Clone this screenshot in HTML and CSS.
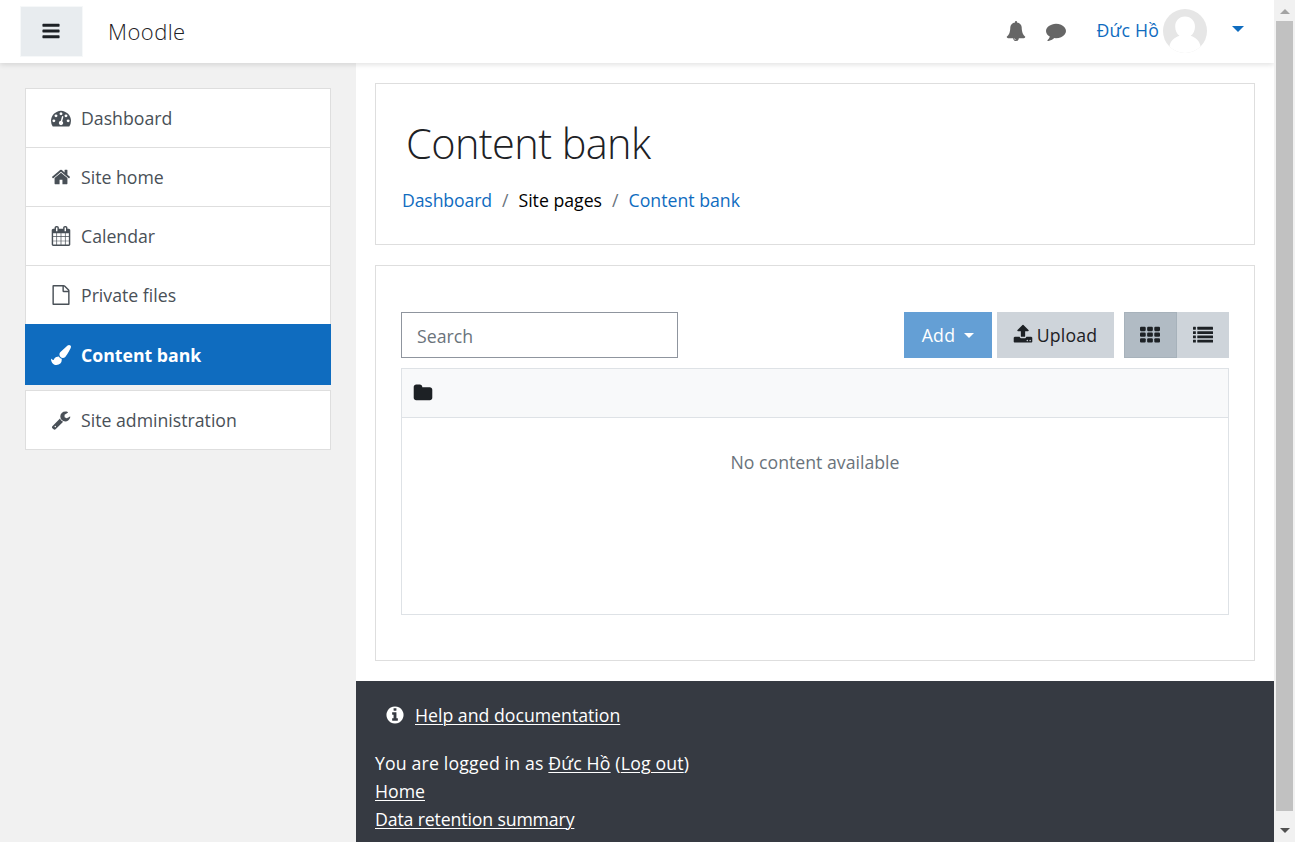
FILE: index.html
```html
<!DOCTYPE html>
<html lang="en">
<head>
<meta charset="utf-8">
<title>Content bank</title>
<link rel="stylesheet" href="styles.css">
</head>
<body>
<div class="window">
  <div class="page">
    <header class="navbar">
      <button class="drawer-toggle" aria-label="Side panel">
        <svg class="icon" viewBox="0 0 1792 1792"><path d="M1664 1344v128q0 26-19 45t-45 19h-1408q-26 0-45-19t-19-45v-128q0-26 19-45t45-19h1408q26 0 45 19t19 45zm0-512v128q0 26-19 45t-45 19h-1408q-26 0-45-19t-19-45v-128q0-26 19-45t45-19h1408q26 0 45 19t19 45zm0-512v128q0 26-19 45t-45 19h-1408q-26 0-45-19t-19-45v-128q0-26 19-45t45-19h1408q26 0 45 19t19 45z"/></svg>
      </button>
      <span class="brand">Moodle</span>
      <div class="tools">
        <svg class="icon" viewBox="0 0 1792 1792"><path d="M912 1696q0-16-16-16-59 0-101.500-42.500t-42.500-101.500q0-16-16-16t-16 16q0 73 51.500 124.500t124.500 51.500q16 0 16-16zm816-288q0 52-38 90t-90 38h-448q0 106-75 181t-181 75-181-75-75-181h-448q-52 0-90-38t-38-90q50-42 91-88t85-119.500 74.500-158.500 50-206 19.500-260q0-152 117-282.500t307-158.500q-8-19-8-39 0-40 28-68t68-28 68 28 28 68q0 20-8 39 190 28 307 158.500t117 282.500q0 139 19.500 260t50 206 74.500 158.500 85 119.500 91 88z"/></svg>
        <svg class="icon" viewBox="0 0 1792 1792"><path d="M1792 896q0 174-120 321.500t-326 233-450 85.500q-70 0-145-8-198 175-460 242-49 14-114 22-17 2-30.500-9t-17.500-29v-1q-3-4-.5-12t2-10 4.500-9.500l6-9 7-8.500 8-9q7-8 31-34.500t34.500-38 31-39.500 32.500-51 27-59 26-76q-157-89-247.500-220t-90.500-281q0-130 71-248.500t191-204.500 286-136.500 348-50.500q244 0 450 85.500t326 233 120 321.500z"/></svg>
      </div>
      <a class="user"><span class="username">Đức Hồ</span>
        <svg class="avatar" viewBox="0 0 44 44"><defs><clipPath id="disc"><circle cx="22" cy="22" r="22"/></clipPath></defs><g clip-path="url(#disc)"><rect width="44" height="44" fill="#e6e6e6"/><path fill="#fff" d="M22 7.500c-6 0-9.800 4.300-9.800 10.200 0 4 1.700 7.200 4.300 9C11 28.500 7.500 32 6.500 37L4 44h36l-2.500-7c-1-5-4.500-8.500-9.800-10.300 2.600-1.800 4.300-5 4.300-9 0-5.900-4-10.200-10-10.200z"/></g></svg>
      </a>
      <span class="caret user-caret"></span>
    </header>
    <div class="columns">
      <nav class="drawer">
        <ul class="nav-group">
          <li class="nav-item"><svg class="icon" viewBox="0 0 1792 1792"><path d="M384 1152q0-53-37.500-90.500t-90.500-37.500-90.500 37.500-37.500 90.500 37.500 90.500 90.500 37.500 90.500-37.500 37.500-90.500zm192-448q0-53-37.500-90.500t-90.500-37.500-90.500 37.500-37.500 90.500 37.500 90.500 90.500 37.500 90.500-37.500 37.500-90.500zm428 481l101-382q6-26-7.500-48.500t-38.500-29.500-48 6.500-30 39.500l-101 382q-60 5-107 43.500t-63 98.500q-20 77 20 146t117 89 146-20 89-117q16-60-6-117t-72-91zm660-33q0-53-37.500-90.500t-90.500-37.500-90.500 37.500-37.500 90.500 37.500 90.500 90.500 37.500 90.500-37.500 37.500-90.500zm-640-640q0-53-37.500-90.500t-90.500-37.500-90.500 37.500-37.500 90.500 37.500 90.500 90.500 37.500 90.500-37.500 37.500-90.500zm448 192q0-53-37.500-90.500t-90.500-37.500-90.500 37.500-37.500 90.500 37.500 90.500 90.500 37.500 90.500-37.500 37.500-90.500zm320 448q0 261-141 483-19 29-54 29h-1402q-35 0-54-29-141-221-141-483 0-182 71-348t191-286 286-191 348-71 348 71 286 191 191 286 71 348z"/></svg><span>Dashboard</span></li>
          <li class="nav-item"><svg class="icon" viewBox="0 0 1792 1792"><path d="M1472 992v480q0 26-19 45t-45 19h-384v-384h-256v384h-384q-26 0-45-19t-19-45v-480q0-1 .5-3t.5-3l575-474 575 474q1 2 1 6zm223-69l-62 74q-8 9-21 11h-3q-13 0-21-7l-692-577-692 577q-12 8-24 7-13-2-21-11l-62-74q-8-10-7-23.500t11-21.500l719-599q32-26 76-26t76 26l244 204v-195q0-14 9-23t23-9h192q14 0 23 9t9 23v408l219 182q10 8 11 21.500t-7 23.500z"/></svg><span>Site home</span></li>
          <li class="nav-item"><svg class="icon" viewBox="0 0 1792 1792"><path d="M192 1664h288v-288h-288v288zm352 0h320v-288h-320v288zm-352-352h288v-320h-288v320zm352 0h320v-320h-320v320zm-352-384h288v-288h-288v288zm736 736h320v-288h-320v288zm-384-736h320v-288h-320v288zm768 736h288v-288h-288v288zm-384-352h320v-320h-320v320zm-352-864v-288q0-13-9.500-22.500t-22.500-9.500h-64q-13 0-22.500 9.500t-9.500 22.500v288q0 13 9.500 22.500t22.500 9.500h64q13 0 22.500-9.500t9.500-22.500zm736 864h288v-320h-288v320zm-384-384h320v-288h-320v288zm384 0h288v-288h-288v288zm32-480v-288q0-13-9.500-22.500t-22.500-9.500h-64q-13 0-22.500 9.500t-9.500 22.500v288q0 13 9.500 22.500t22.500 9.500h64q13 0 22.500-9.500t9.500-22.500zm384-64v1280q0 52-38 90t-90 38h-1408q-52 0-90-38t-38-90v-1280q0-52 38-90t90-38h128v-96q0-66 47-113t113-47h64q66 0 113 47t47 113v96h384v-96q0-66 47-113t113-47h64q66 0 113 47t47 113v96h128q52 0 90 38t38 90z"/></svg><span>Calendar</span></li>
          <li class="nav-item"><svg class="icon" viewBox="0 0 1792 1792"><path d="M1596 380q28 28 48 76t20 88v1152q0 40-28 68t-68 28h-1344q-40 0-68-28t-28-68v-1600q0-40 28-68t68-28h896q40 0 88 20t76 48zm-444-244v376h376q-10-29-22-41l-313-313q-12-12-41-22zm384 1528v-1024h-416q-40 0-68-28t-28-68v-416h-768v1536h1280z"/></svg><span>Private files</span></li>
          <li class="nav-item active"><svg class="icon" viewBox="0 0 1792 1792"><path d="M1615 0q70 0 122.500 46.500t52.500 116.500q0 63-45 151-332 629-465 752-97 91-218 91-126 0-216.500-92.500t-90.500-219.500q0-128 92-212l638-579q59-54 130-54zm-909 1034q39 76 106.500 130t150.500 76l1 71q4 213-129.500 347t-348.500 134q-123 0-218-46.500t-152.500-127.500-86.500-183-29-220q7 5 41 30t62 44.500 59 36.500 46 17q41 0 55-37 25-66 57.500-112.500t69.500-76 88-47.500 103-25.500 125-10.500z"/></svg><span>Content bank</span></li>
        </ul>
        <ul class="nav-group">
          <li class="nav-item"><svg class="icon" viewBox="0 0 1792 1792"><path d="M448 1472q0-26-19-45t-45-19-45 19-19 45 19 45 45 19 45-19 19-45zm644-420l-682 682q-37 37-90 37-52 0-91-37l-106-108q-38-36-38-90 0-53 38-91l681-681q39 98 114.500 173.500t173.500 114.500zm634-435q0 39-23 106-47 134-164.500 217.500t-258.500 83.500q-185 0-316.500-131.500t-131.500-316.500 131.500-316.500 316.500-131.500q58 0 121.500 16.500t107.500 46.500q16 11 16 28t-16 28l-293 169v224l193 107q5-3 79-48.500t135.500-81 70.500-35.500q15 0 23.500 10t8.500 25z"/></svg><span>Site administration</span></li>
        </ul>
      </nav>
      <div class="main">
        <section class="card page-header">
          <h1>Content bank</h1>
          <div class="breadcrumb"><a>Dashboard</a><i>/</i><span>Site pages</span><i>/</i><a>Content bank</a></div>
        </section>
        <section class="card content">
          <div class="toolbar">
            <input class="search" type="text" placeholder="Search">
            <div class="actions">
              <button class="btn btn-add"><span>Add</span><span class="caret"></span></button>
              <button class="btn btn-upload"><svg class="icon" viewBox="0 0 1792 1792"><path d="M1344 1472q0-26-19-45t-45-19-45 19-19 45 19 45 45 19 45-19 19-45zm256 0q0-26-19-45t-45-19-45 19-19 45 19 45 45 19 45-19 19-45zm128-224v320q0 40-28 68t-68 28h-1472q-40 0-68-28t-28-68v-320q0-40 28-68t68-28h427q21 56 70.500 92t110.500 36h256q61 0 110.500-36t70.500-92h427q40 0 68 28t28 68zm-325-648q-17 40-59 40h-256v448q0 26-19 45t-45 19h-256q-26 0-45-19t-19-45v-448h-256q-42 0-59-40-17-39 14-69l448-448q18-19 45-19t45 19l448 448q31 30 14 69z"/></svg><span>Upload</span></button>
              <div class="view-switch">
                <button class="btn btn-grid" aria-label="Icons"><svg class="icon" viewBox="0 0 1792 1792"><g><rect x="0" y="256" width="512" height="384" rx="96"/><rect x="640" y="256" width="512" height="384" rx="96"/><rect x="1280" y="256" width="512" height="384" rx="96"/><rect x="0" y="768" width="512" height="384" rx="96"/><rect x="640" y="768" width="512" height="384" rx="96"/><rect x="1280" y="768" width="512" height="384" rx="96"/><rect x="0" y="1280" width="512" height="384" rx="96"/><rect x="640" y="1280" width="512" height="384" rx="96"/><rect x="1280" y="1280" width="512" height="384" rx="96"/></g></svg></button>
                <button class="btn btn-list" aria-label="List"><svg class="icon" viewBox="0 0 1792 1792"><g><rect x="0" y="256" width="256" height="256" rx="32"/><rect x="384" y="256" width="1408" height="256" rx="32"/><rect x="0" y="640" width="256" height="256" rx="32"/><rect x="384" y="640" width="1408" height="256" rx="32"/><rect x="0" y="1024" width="256" height="256" rx="32"/><rect x="384" y="1024" width="1408" height="256" rx="32"/><rect x="0" y="1408" width="256" height="256" rx="32"/><rect x="384" y="1408" width="1408" height="256" rx="32"/></g></svg></button>
              </div>
            </div>
          </div>
          <div class="bank">
            <div class="bank-path"><svg class="icon" viewBox="0 0 1792 1792"><path d="M1728 608v704q0 92-66 158t-158 66h-1216q-92 0-158-66t-66-158v-960q0-92 66-158t158-66h320q92 0 158 66t66 158v32h672q92 0 158 66t66 158z"/></svg></div>
            <p class="empty">No content available</p>
          </div>
        </section>
        <footer class="footer">
          <div class="help"><svg class="icon" viewBox="0 0 1792 1792"><path d="M1152 1376v-160q0-14-9-23t-23-9h-96v-512q0-14-9-23t-23-9h-320q-14 0-23 9t-9 23v160q0 14 9 23t23 9h96v320h-96q-14 0-23 9t-9 23v160q0 14 9 23t23 9h448q14 0 23-9t9-23zm-128-896v-160q0-14-9-23t-23-9h-192q-14 0-23 9t-9 23v160q0 14 9 23t23 9h192q14 0 23-9t9-23zm640 416q0 209-103 385.500t-279.500 279.500-385.500 103-385.500-103-279.500-279.500-103-385.500 103-385.500 279.500-279.500 385.500-103 385.500 103 279.500 279.500 103 385.500z"/></svg><a>Help and documentation</a></div>
          <div class="login">You are logged in as <a>Đức Hồ</a> (<a>Log out</a>)</div>
          <div><a>Home</a></div>
          <div><a class="retention">Data retention summary</a></div>
        </footer>
      </div>
    </div>
  </div>
  <div class="scrollbar"><span class="arrow up"></span><span class="thumb"></span><span class="arrow down"></span></div>
</div>
</body>
</html>
```
FILE: styles.css
```css
* { box-sizing: border-box; }
body {
  margin: 0;
  font: 17.7px/28px "Open Sans", "Noto Sans", sans-serif;
  color: #1d2125;
  background: #fff;
  overflow: hidden;
}
ul { list-style: none; margin: 0; padding: 0; }
button, input { font: inherit; color: inherit; letter-spacing: inherit; }
button { border: 0; padding: 0; }
.icon { width: 20px; height: 20px; fill: currentColor; flex: none; display: block; }
.caret { border: 5.500px solid transparent; border-top-color: currentColor; border-bottom: 0; flex: none; }

.window { display: flex; width: 1295px; height: 842px; }
.page { width: 1274px; display: flex; flex-direction: column; }

.navbar {
  height: 63px;
  flex: none;
  display: flex;
  align-items: center;
  padding: 0 30px 0 21px;
  background: #fff;
  box-shadow: 0 2px 5px rgba(0, 0, 0, .11);
  position: relative;
}
.drawer-toggle {
  width: 61px;
  height: 49px;
  background: #e8ecef;
  box-shadow: 0 0 0 1px #f6f8f9;
  display: flex;
  justify-content: center;
  align-items: center;
  padding: 0 1px 2px 0;
}
.brand { margin-left: 26px; font-size: 22px; font-weight: 300; letter-spacing: .45px; padding-bottom: 1px; }
.tools { display: flex; gap: 20px; margin-left: auto; padding-bottom: 2px; color: #666; }
.user { display: flex; align-items: center; gap: 4px; margin-left: 30px; padding-bottom: 2px; color: #0f6cbf; }
.username { padding-bottom: 2px; letter-spacing: .2px; }
.avatar { width: 44px; height: 44px; }
.user-caret { color: #0f6cbf; margin: 0 0 6px 25px; border-width: 6px 6px 0; }

.columns { flex: 1; display: flex; min-height: 0; }
.drawer {
  width: 356px;
  background: #f1f1f1;
  padding: 25px 25px 0;
  display: flex;
  flex-direction: column;
  gap: 5px;
}
.nav-item {
  height: 59px;
  display: flex;
  align-items: center;
  gap: 10px;
  padding: 0 25px 0 25px;
  border: 1px solid #dedede;
  border-bottom: 0;
  background: #fff;
  color: #495057;
}
.nav-item:last-child { border-bottom: 1px solid #dedede; height: 60px; }
.nav-item.active:last-child {
  height: 61px;
  background: #0f6cbf;
  border-color: #0f6cbf;
  color: #fff;
  font-weight: 700;
}

.main { flex: 1; display: flex; flex-direction: column; padding-top: 20px; }
.card { border: 1px solid #dedede; margin: 0 19px 20px; }
.page-header { height: 162px; padding: 34px 26px 0; }
h1 { margin: 0 0 20px 4px; font-size: 41.500px; letter-spacing: -.6px; line-height: 50px; font-weight: 300; }
.breadcrumb { display: flex; color: #000; line-height: 24px; }
.breadcrumb a { color: #0f6cbf; }
.breadcrumb a:first-child { letter-spacing: -.15px; }
.breadcrumb i { font-style: normal; color: #6a737b; padding: 0 10px; }
.content { height: 396px; padding: 46px 25px 0; }
.toolbar { display: flex; justify-content: space-between; height: 46px; margin-bottom: 10px; }
.search { width: 277px; padding: 2px 15px 0; border: 1px solid #8f959e; background: #fff; }
.search::placeholder { color: #6a737b; opacity: 1; }
.actions { display: flex; gap: 5px; }
.btn { display: flex; align-items: center; justify-content: center; background: #ced4da; }
.btn-add { width: 88px; gap: 9px; background: #649fd5; color: #fff; letter-spacing: .3px; }
.btn-upload { width: 117px; gap: 4px; padding-right: 1px; letter-spacing: .15px; }
.view-switch { display: flex; margin-left: 5px; }
.btn .icon { margin-bottom: 2px; }
.btn-grid { width: 53px; padding-right: 1px; background: #b1bbc4; border: 1px solid #a7b2bb; }
.btn-list { width: 52px; }
.bank { height: 247px; border: 1px solid #dee2e6; }
.bank-path { height: 49px; padding: 14px 11px; background: #f8f9fa; border-bottom: 1px solid #dee2e6; }
.empty { margin: 30px 0 0; text-align: center; color: #6a737b; }

.footer { flex: 1; background: #363a42; color: #fff; padding: 20px 19px 0; white-space: nowrap; }
.footer a { text-decoration: underline; text-decoration-thickness: 1px; text-underline-offset: 2px; }
.help { display: flex; align-items: center; gap: 10px; padding-left: 10px; margin-bottom: 20px; }
.login { letter-spacing: .16px; }
.retention { letter-spacing: -.14px; }

.scrollbar {
  width: 21px;
  background: #f1f1f1;
  display: flex;
  flex-direction: column;
  align-items: center;
  position: relative;
}
.arrow { border: 5px solid transparent; }
.up { margin-top: 9px; border-top: 0; border-bottom-color: #a3a3a3; }
.down { margin-top: 17px; border-bottom: 0; border-top-color: #505050; }
.thumb { width: 17px; height: 790px; margin-top: 7px; background: #c1c1c1; }
```
